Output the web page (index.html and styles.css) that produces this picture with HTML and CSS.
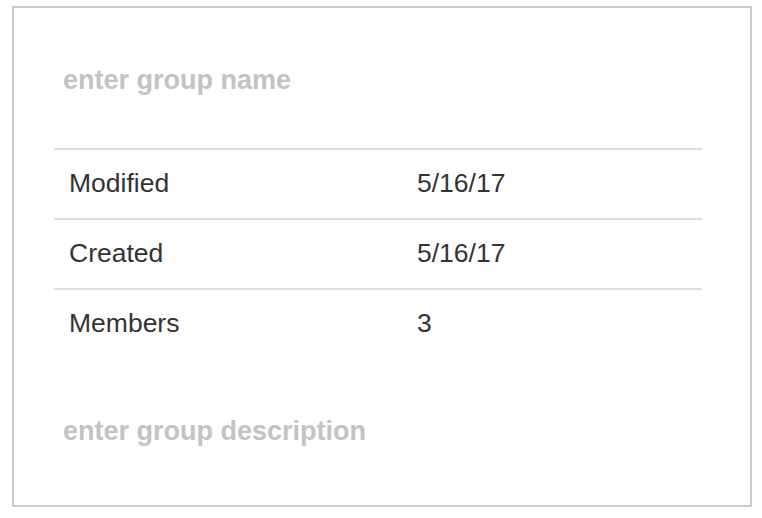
FILE: index.html
```html
<!DOCTYPE html>
<html>
<head>
<meta charset="utf-8">
<link rel="stylesheet" href="styles.css">
</head>
<body>
<div class="card">
  <div class="title">enter group name</div>
  <div class="info">
    <div class="row"><span class="label">Modified</span><span class="value">5/16/17</span></div>
    <div class="row"><span class="label">Created</span><span class="value">5/16/17</span></div>
    <div class="row"><span class="label">Members</span><span class="value">3</span></div>
  </div>
  <div class="desc">enter group description</div>
</div>
</body>
</html>
```
FILE: styles.css
```css
html, body {
  margin: 0;
  padding: 0;
  background: #fff;
}
body {
  font-family: "Liberation Sans", Arial, sans-serif;
}
.card {
  box-sizing: border-box;
  margin: 6px 0 0 12px;
  width: 740px;
  height: 501px;
  border: 2px solid #cbcbcb;
  display: flex;
  flex-direction: column;
}
.title, .desc {
  color: #c3c3c3;
  font-weight: bold;
  font-size: 27px;
  line-height: 40px;
  padding-left: 49px;
}
.title {
  padding-top: 52px;
  box-sizing: border-box;
  height: 140px;
}
.info {
  margin: 0 48px 0 40px;
}
.row {
  display: grid;
  grid-template-columns: 348px 1fr;
  border-top: 2px solid #dcdcdc;
  height: 70px;
  box-sizing: border-box;
  line-height: 66px;
  font-size: 26.5px;
  color: #333;
}
.label, .value {
  padding-left: 15px;
}
.desc {
  margin-top: 53px;
}
```
